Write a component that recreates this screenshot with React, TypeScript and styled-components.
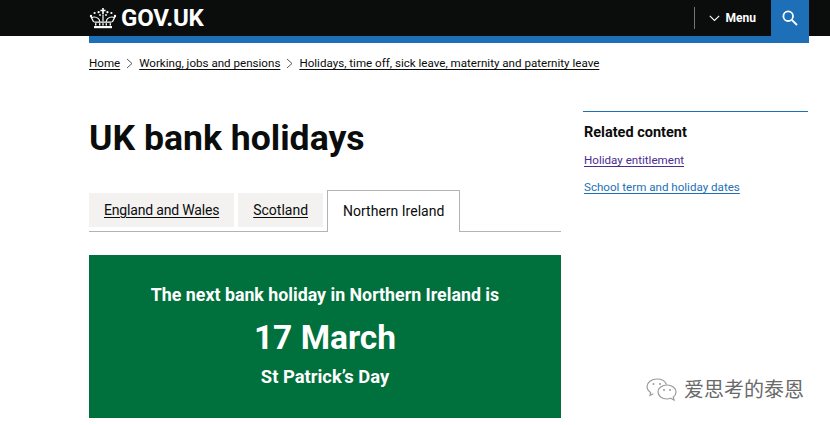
import React from "react";
import styled, { createGlobalStyle } from "styled-components";

const GlobalStyle = createGlobalStyle`
  html, body {
    margin: 0;
    padding: 0;
    background: #fff;
    overflow: hidden;
  }
  body {
    font-family: Roboto, "Liberation Sans", sans-serif;
    color: #0b0c0c;
  }
`;

const Page = styled.div`
  position: relative;
  width: 830px;
  height: 425px;
  overflow: hidden;
`;

const Header = styled.header`
  height: 36px;
  background: #0b0c0c;
  padding: 0 21px 0 89px;
  display: flex;
  align-items: center;
  justify-content: space-between;
`;

const Logo = styled.a`
  display: flex;
  align-items: center;
  gap: 4px;
  color: #fff;
  font-size: 24px;
  font-weight: 700;
  letter-spacing: -0.2px;
  text-decoration: none;
`;

const HeaderRight = styled.div`
  display: flex;
  align-items: center;
  height: 36px;
`;

const Divider = styled.span`
  width: 1px;
  height: 22px;
  background: #6f777b;
`;

const MenuButton = styled.div`
  display: flex;
  align-items: center;
  gap: 6px;
  padding: 0 15px 0 14px;
  color: #fff;
  font-size: 12px;
  font-weight: 700;
`;

const SearchButton = styled.div`
  width: 38px;
  height: 36px;
  background: #1d70b8;
  display: flex;
  align-items: center;
  justify-content: center;
`;

const BlueBar = styled.div`
  height: 7px;
  margin: 0 21px 0 89px;
  background: #1d70b8;
`;

const Breadcrumbs = styled.nav`
  display: flex;
  align-items: center;
  gap: 4px;
  margin: 12px 0 0 89px;
  height: 16px;
  font-size: 11.6px;
`;

const Crumb = styled.a`
  color: #0b0c0c;
  text-decoration: underline;
  text-underline-offset: 2px;
`;

const Columns = styled.main`
  display: grid;
  grid-template-columns: 472px 225px;
  column-gap: 22px;
  padding-left: 89px;
`;

const Content = styled.div`
  display: flex;
  flex-direction: column;
`;

const Title = styled.h1`
  margin: 45px 0 0;
  font-size: 35.6px;
  line-height: 44px;
  font-weight: 700;
`;

const Tabs = styled.div`
  display: flex;
  align-items: flex-end;
  gap: 4px;
  height: 42px;
  margin-top: 29px;
  border-bottom: 1px solid #b1b4b6;
`;

const Tab = styled.a<{ $active?: boolean; $tight?: boolean }>`
  display: flex;
  align-items: center;
  justify-content: center;
  box-sizing: border-box;
  color: #0b0c0c;
  font-size: 14px;
  letter-spacing: ${({ $tight }) => ($tight ? "-0.18px" : "0")};
  text-underline-offset: 2px;
  padding: 0 15px;
  ${({ $active }) =>
    $active
      ? `
    height: 42px;
    margin-bottom: -1px;
    padding-bottom: 2px;
    background: #fff;
    border: 1px solid #b1b4b6;
    border-bottom: 0;
    text-decoration: none;
  `
      : `
    height: 34px;
    margin-bottom: 4px;
    background: #f3f2f1;
    text-decoration: underline;
  `}
`;

const Banner = styled.section`
  margin-top: 23px;
  height: 163px;
  background: #00703c;
  color: #fff;
  display: flex;
  flex-direction: column;
  align-items: center;
  font-weight: 700;
`;

const BannerLead = styled.div`
  margin-top: 29px;
  font-size: 17.8px;
  line-height: 22px;
`;

const BannerDate = styled.div`
  margin-top: 10px;
  font-size: 33.5px;
  line-height: 44px;
`;

const BannerName = styled.div`
  margin-top: 6px;
  font-size: 18.4px;
  line-height: 22px;
`;

const Sidebar = styled.aside`
  margin-top: 40px;
  height: 100px;
  border-top: 1px solid #1d70b8;
`;

const SidebarTitle = styled.h2`
  margin: 11px 0 5px;
  padding-left: 1px;
  font-size: 14.5px;
  line-height: 20px;
  font-weight: 700;
`;

const RelatedLink = styled.a<{ $visited?: boolean }>`
  display: block;
  margin-top: 7px;
  padding-left: 1px;
  font-size: 11.6px;
  line-height: 20px;
  color: ${({ $visited }) => ($visited ? "#4c2c92" : "#1d70b8")};
  text-decoration: underline;
  text-underline-offset: 2px;
`;

const Watermark = styled.div`
  position: absolute;
  left: 645px;
  top: 376px;
  display: flex;
  align-items: center;
  gap: 5px;
  color: #6a6a6a;
  font-family: "Noto Sans CJK SC", sans-serif;
  font-size: 20px;
  line-height: 26px;
  text-shadow: 0 0 2px #fff;
`;

const Crown = () => (
  <svg width="28" height="22" viewBox="0 0 28 22" aria-hidden="true">
    <g fill="#fff">
      <path d="M13.200 1h1.600v1.800h1.800v1.500h-1.800V7h-1.600V4.300h-1.800V2.800h1.800z" />
      <circle cx="9.600" cy="5.200" r="1.100" />
      <circle cx="18.400" cy="5.200" r="1.100" />
      <circle cx="5.600" cy="6" r="1.100" />
      <circle cx="22.400" cy="6" r="1.100" />
      <circle cx="2" cy="9" r="1.200" />
      <circle cx="26" cy="9" r="1.200" />
      <circle cx="11" cy="8" r=".9" />
      <circle cx="17" cy="8" r=".9" />
      <path d="M5 19h18v2.200H5z" />
      <path d="M5 14.500h18l-.5 1.300h-17z" />
      <path d="M6 16.200h1.400v2.300H6zM10 16.200h1.400v2.300H10zM13.300 16.200h1.400v2.300h-1.400zM16.600 16.200H18v2.300h-1.400zM20.600 16.200H22v2.300h-1.400z" />
    </g>
    <g fill="none" stroke="#fff" strokeWidth="1.200">
      <path d="M4.600 15C3.800 13 3 11.600 2.400 10.600c2.400-1 5-.6 7 1 .8.700 1.200 1.800 1.300 3.200" />
      <path d="M23.400 15c.8-2 1.600-3.400 2.200-4.400-2.400-1-5-.6-7 1-.8.700-1.200 1.800-1.300 3.200" />
      <path d="M14 7.500v7" />
    </g>
  </svg>
);

const Chevron = () => (
  <svg width="11" height="11" viewBox="0 0 11 11" fill="none" stroke="#505a5f" strokeWidth="1">
    <path d="M3 1l5 4.500L3 10" />
  </svg>
);

const WeChat = () => (
  <svg width="34" height="26" viewBox="0 0 34 26" fill="none" stroke="#9a9a9a" strokeWidth="1.200">
    <path d="M12 3C6.500 3 2 6.400 2 10.600c0 2.400 1.500 4.500 3.600 5.900L5 19.500l3.300-1.700" />
    <path d="M12 3c4.500 0 8.200 2.200 9.500 5.400" />
    <path d="M22 9c5 0 9 3.100 9 7 0 2-1 3.800-2.700 5l.7 3-3.200-1.700c-1.200.4-2.500.7-3.800.7-5 0-9-3.100-9-7s4-7 9-7z" />
    <circle cx="8.500" cy="8" r="1" fill="#9a9a9a" stroke="none" />
    <circle cx="15" cy="8" r="1" fill="#9a9a9a" stroke="none" />
    <circle cx="19" cy="14" r="1" fill="#9a9a9a" stroke="none" />
    <circle cx="25" cy="14" r="1" fill="#9a9a9a" stroke="none" />
  </svg>
);

export default function App() {
  return (
    <Page>
      <GlobalStyle />
      <Header>
        <Logo>
          <Crown />
          GOV.UK
        </Logo>
        <HeaderRight>
          <Divider />
          <MenuButton>
            <svg width="11" height="7" viewBox="0 0 11 7" fill="none" stroke="#fff" strokeWidth="1.100">
              <path d="M.8.800l4.700 4.700L10.200.800" />
            </svg>
            Menu
          </MenuButton>
          <SearchButton>
            <svg width="16" height="16" viewBox="0 0 16 16" fill="none" stroke="#fff" strokeWidth="1.800">
              <circle cx="6.200" cy="6.200" r="4.800" />
              <path d="M9.800 9.800L15 15" />
            </svg>
          </SearchButton>
        </HeaderRight>
      </Header>
      <BlueBar />
      <Breadcrumbs>
        <Crumb>Home</Crumb>
        <Chevron />
        <Crumb>Working, jobs and pensions</Crumb>
        <Chevron />
        <Crumb>Holidays, time off, sick leave, maternity and paternity leave</Crumb>
      </Breadcrumbs>
      <Columns>
        <Content>
          <Title>UK bank holidays</Title>
          <Tabs>
            <Tab $tight>England and Wales</Tab>
            <Tab>Scotland</Tab>
            <Tab $active>Northern Ireland</Tab>
          </Tabs>
          <Banner>
            <BannerLead>The next bank holiday in Northern Ireland is</BannerLead>
            <BannerDate>17 March</BannerDate>
            <BannerName>St Patrick’s Day</BannerName>
          </Banner>
        </Content>
        <Sidebar>
          <SidebarTitle>Related content</SidebarTitle>
          <RelatedLink $visited>Holiday entitlement</RelatedLink>
          <RelatedLink>School term and holiday dates</RelatedLink>
        </Sidebar>
      </Columns>
      <Watermark>
        <WeChat />
        爱思考的泰恩
      </Watermark>
    </Page>
  );
}
